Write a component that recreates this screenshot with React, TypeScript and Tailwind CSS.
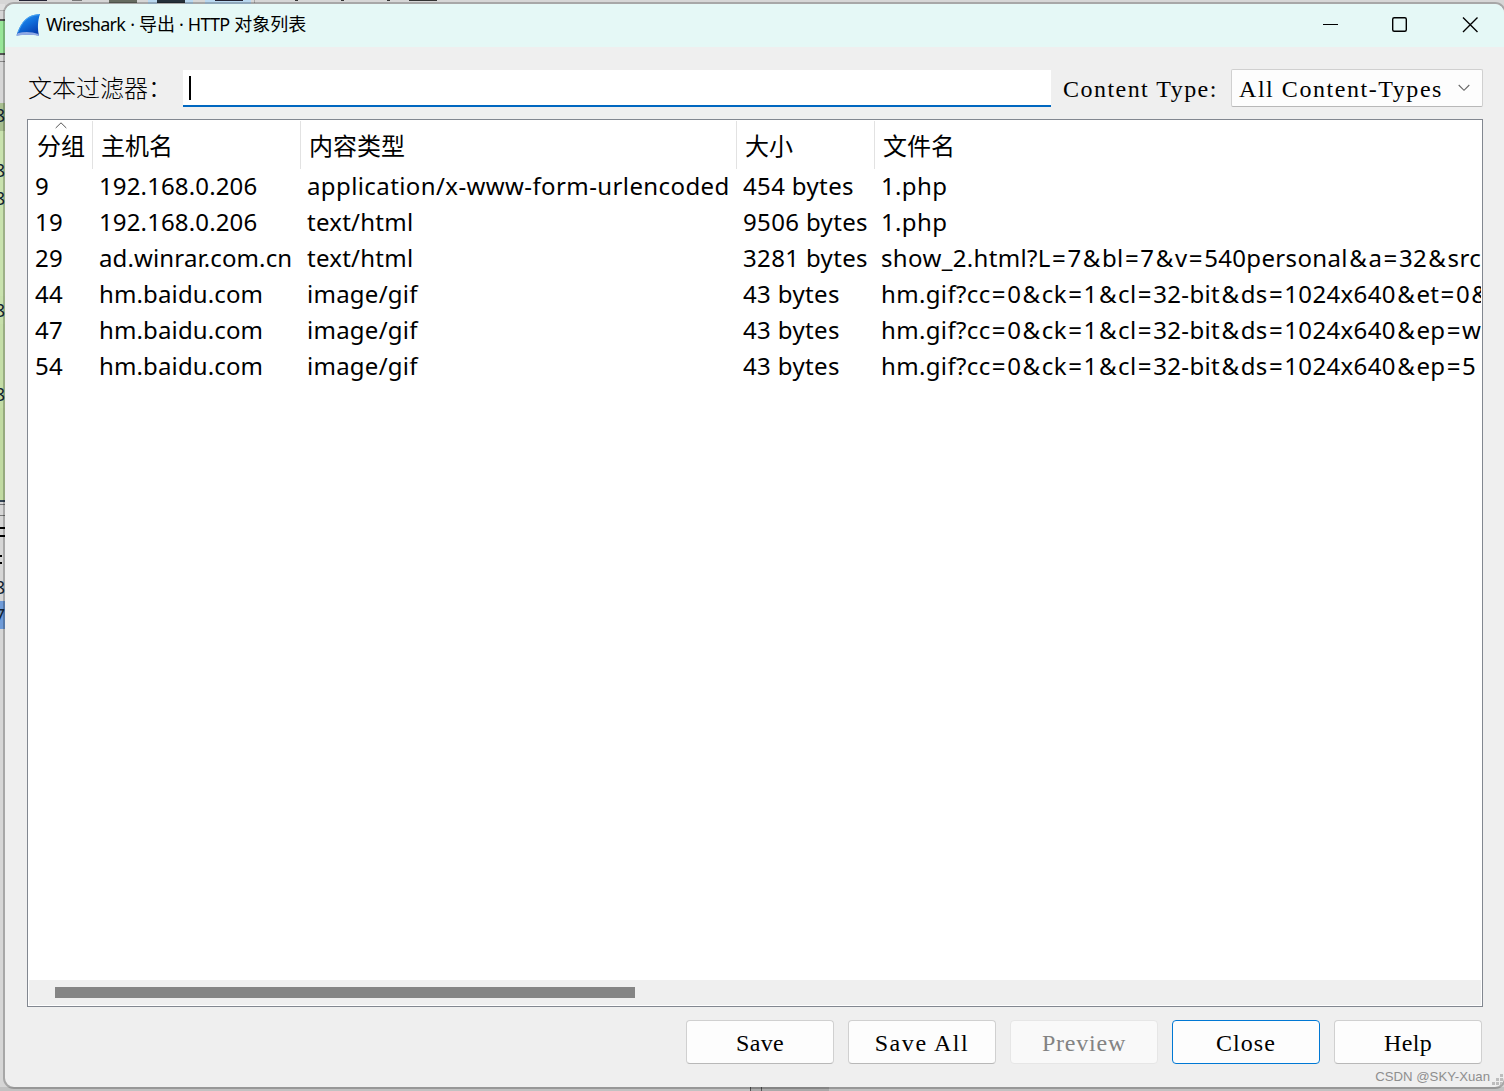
import React from 'react';

const UI = "font-['Noto_Sans','Noto_Sans_CJK_SC',sans-serif]";
const SONG = "font-['Liberation_Serif','Noto_Sans_CJK_SC',serif]";

const columns = [
  { name: '分组', cls: 'w-[64px]', sorted: true },
  { name: '主机名', cls: 'w-[208px]' },
  { name: '内容类型', cls: 'w-[436px]' },
  { name: '大小', cls: 'w-[138px]' },
  { name: '文件名', cls: 'flex-1' },
];

const rows = [
  { id: '9', host: '192.168.0.206', type: 'application/x-www-form-urlencoded', size: '454 bytes', file: '1.php' },
  { id: '19', host: '192.168.0.206', type: 'text/html', size: '9506 bytes', file: '1.php' },
  { id: '29', host: 'ad.winrar.com.cn', type: 'text/html', size: '3281 bytes', file: 'show_2.html?L=7&bl=7&v=540personal&a=32&src' },
  { id: '44', host: 'hm.baidu.com', type: 'image/gif', size: '43 bytes', file: 'hm.gif?cc=0&ck=1&cl=32-bit&ds=1024x640&et=0&' },
  { id: '47', host: 'hm.baidu.com', type: 'image/gif', size: '43 bytes', file: 'hm.gif?cc=0&ck=1&cl=32-bit&ds=1024x640&ep=w' },
  { id: '54', host: 'hm.baidu.com', type: 'image/gif', size: '43 bytes', file: 'hm.gif?cc=0&ck=1&cl=32-bit&ds=1024x640&ep=5' },
];

const buttons = [
  { label: 'Save', cls: 'border-[#d0d0d0] border-b-[#b8b8b8] bg-[#fdfdfd] text-black tracking-[0.33px]' },
  { label: 'Save All', cls: 'border-[#d0d0d0] border-b-[#b8b8b8] bg-[#fdfdfd] text-black tracking-[1.58px]' },
  { label: 'Preview', cls: 'border-[#e6e6e6] bg-[#f9f9f9] text-[#838383] tracking-[0.77px]' },
  { label: 'Close', cls: 'border-[#0078d4] bg-[#fdfdfd] text-black tracking-[1.07px]' },
  { label: 'Help', cls: 'border-[#d0d0d0] border-b-[#b8b8b8] bg-[#fdfdfd] text-black tracking-[0.33px]' },
];

// Bits of the main window's toolbar that show above the dialog.
const toolbar = [
  'ml-[19px] h-px w-[28px] bg-[#223]',
  'ml-[25px] h-px w-[10px] bg-[#777]',
  'ml-[27px] h-[3px] w-[28px] bg-[#666b60]',
  'ml-[11px] h-1 w-[9px] bg-[#b9d8f0]',
  'h-[3px] w-[28px] bg-[#25303a]',
  'h-1 w-[8px] bg-[#b9d8f0]',
  'ml-[12px] h-1 w-[10px] bg-[#b9d8f0]',
  'h-1 w-[28px] border-t border-[#223] bg-[#b9d8f0]',
  'h-1 w-[8px] bg-[#b9d8f0]',
  'ml-[3px] h-[3px] w-px bg-[#aaa]',
  'ml-[40px] h-px w-[3px] bg-[#333]',
  'ml-[43px] h-px w-[3px] bg-[#333]',
  'ml-[43px] h-px w-[3px] bg-[#333]',
  'ml-[19px] h-px w-[28px] bg-[#333]',
];

// Slices of the packet list and the byte view left of the dialog, top to bottom.
const slices = [
  { cls: 'h-[7px] border-b border-[#b0b0b0] bg-[#e0e0e0]' },
  { cls: 'h-[8px]' },
  { cls: 'h-[36px] border-y-2 border-[#555] bg-[#98e698]' },
  { cls: 'h-[7px] border-b border-[#888]' },
  { cls: 'h-[41px]' },
  { cls: 'h-[28px] bg-[#a8bf90] pb-[5px]', text: '8' },
  { cls: 'h-[25px] bg-[#c9e2ae]' },
  { cls: 'h-[28px] bg-[#c9e2ae]', text: '8' },
  { cls: 'h-[28px] bg-[#c9e2ae]', text: '8' },
  { cls: 'h-[84px] bg-[#c9e2ae]' },
  { cls: 'h-[28px] bg-[#c7e0ab]', text: '8' },
  { cls: 'h-[56px] bg-[#c5dea8]' },
  { cls: 'h-[28px] bg-[#c3dca5]', text: '8' },
  { cls: 'h-[94px] border-b-2 border-[#345] bg-[#c1daa2]' },
  { cls: 'h-[2px]' },
  { cls: 'h-[12px] border-y border-[#777]' },
  { cls: 'h-[11px]' },
  { cls: 'h-[10px] border-y-2 border-black' },
  { cls: 'h-[36px] pt-[8px]', dots: true },
  { cls: 'h-[28px]', text: '8' },
  { cls: 'h-[28px] bg-[#6f9bd8]', text: '7' },
];

function SharkFin() {
  return (
    <svg className="mt-px h-6 w-6" viewBox="0 0 24 24">
      <defs>
        <linearGradient id="fin" x1="0.2" y1="0" x2="0.8" y2="1">
          <stop offset="0" stopColor="#2f96f0" />
          <stop offset="0.45" stopColor="#0f6fdc" />
          <stop offset="1" stopColor="#0637a8" />
        </linearGradient>
      </defs>
      <path d="M.5 22.5C4 12 9 1.500 24 1C21.500 8 21.500 16 23 22.500Q12 20.500 .5 22.500Z" fill="url(#fin)" />
      <path d="M1.500 20.300Q12 17.500 22.500 21L23 22.700Q12 21 .5 22.700Z" fill="#8fa8e4" />
      <path d="M2 19.500C6 9 11 2.500 23 1.600" fill="none" stroke="#55aef5" strokeWidth=".8" />
    </svg>
  );
}

// File names give "=" and "&" a little more room than letters and digits.
function FileName({ value }: { value: string }) {
  return (
    <span className="tracking-[0.35px]">
      {value.split(/([=&])/).map((part, i) =>
        i % 2 ? (
          <span key={i} className="mx-[1.3px]">
            {part}
          </span>
        ) : (
          part
        ),
      )}
    </span>
  );
}

function Backdrop() {
  return (
    <div className={`absolute inset-0 flex flex-col overflow-hidden bg-[#d6d6d6] text-[18px] leading-none text-[#123] ${UI}`}>
      <div className="flex h-1 shrink-0 items-start">
        {toolbar.map((cls, i) => (
          <div key={i} className={`shrink-0 ${cls}`} />
        ))}
      </div>
      <div className="flex w-[5px] flex-1 flex-col">
        {slices.map((s, i) => (
          <div key={i} className={`flex w-[5px] shrink-0 flex-col items-end justify-center ${s.cls}`}>
            {s.text}
            {s.dots && (
              <div className="mr-[3px] flex flex-col gap-[5px]">
                <div className="size-[2px] bg-black" />
                <div className="size-[2px] bg-black" />
              </div>
            )}
          </div>
        ))}
      </div>
      <div className="flex h-1 shrink-0 bg-[#c2c2c2] pl-[750px]">
        <div className="w-3 border-x border-[#555] bg-[#aaa]" />
        <div className="w-[67px] bg-[#aaa]" />
      </div>
    </div>
  );
}

export default function App() {
  return (
    <div className="relative h-[1091px] w-[1504px] overflow-hidden pl-[3px] pt-[2px]">
      <Backdrop />
      <div className="relative flex h-[1087px] w-[1503px] flex-col overflow-hidden rounded-[11px] border-2 border-black/22 bg-[#efefef] bg-clip-padding">
        <header className="flex h-[43px] shrink-0 items-center bg-[#e5f8f6] pb-[3px] pl-[11px]">
          <SharkFin />
          <h1 className={`ml-[6px] flex gap-[5px] whitespace-pre text-[18px] leading-6 text-black ${UI}`}>
            <span className="tracking-[-0.7px]">Wireshark</span>
            <span>·</span>
            <span className="ml-[-1px]">导出</span>
            <span className="ml-[-1px]">·</span>
            <span className="ml-[-1px] tracking-[-0.8px]">HTTP</span>
            <span>对象列表</span>
          </h1>
          <svg className="ml-auto mr-[23px] mt-[2px] h-[18px] w-[160px]" viewBox="0 0 160 18" fill="none" stroke="#000" strokeWidth="1.4">
            <path d="M2 8.500H17" strokeWidth="1" />
            <rect x="71.700" y="1.700" width="13.600" height="13.600" rx="1.500" />
            <path d="M142 1.500L156.500 16M156.500 1.500L142 16" />
          </svg>
        </header>

        <div className={`mt-[22px] flex h-[38px] shrink-0 items-center pl-[22px] text-[24px] text-black ${SONG}`}>
          <label className="w-[156px] whitespace-nowrap pl-px pt-[2px] font-light leading-8">文本过滤器：</label>
          <div className="flex h-[37px] w-[868px] items-center border-b-2 border-[#0067c0] bg-white pl-[6px] pt-px">
            <div className="h-6 w-[2px] bg-black" />
          </div>
          <span className="ml-3 w-[168px] whitespace-pre pt-[2px] tracking-[1.46px]">Content Type:</span>
          <div className="flex h-[38px] w-[252px] items-center rounded-[2px] border border-[#d0d0d0] border-b-[#b8b8b8] bg-[#fdfdfd] pl-[7px]">
            <span className="whitespace-pre pt-[2px] tracking-[1.55px]">All Content-Types</span>
            <svg className="ml-auto mr-3 h-[8px] w-3" viewBox="0 0 12 8" fill="none" stroke="#666" strokeWidth="1.100">
              <path d="M.7 1L6 6.300L11.300 1" />
            </svg>
          </div>
        </div>

        <main className={`ml-[22px] mt-3 flex h-[888px] w-[1456px] shrink-0 flex-col border border-[#828790] bg-white p-px text-[24px] text-black ${UI}`}>
          <div className="flex h-12 shrink-0">
            {columns.map((c) => (
              <div key={c.name} className={`relative flex shrink-0 items-center border-r border-[#e2e2e2] pl-2 pt-[2px] last:border-r-0 ${c.cls}`}>
                {c.sorted && (
                  <svg className="absolute inset-x-0 top-px mx-auto h-[7px] w-3" viewBox="0 0 12 7" fill="none" stroke="#555" strokeWidth="1">
                    <path d="M.7 6L6 .8L11.300 6" />
                  </svg>
                )}
                <span className="whitespace-nowrap leading-8">{c.name}</span>
              </div>
            ))}
          </div>
          <div className="mt-[-1px] flex flex-1 flex-col overflow-hidden">
            {rows.map((r) => (
              <div key={r.id} className="flex h-9 shrink-0 items-center whitespace-pre pl-[6px] leading-9">
                <span className="w-16 shrink-0 tracking-[0.2px]">{r.id}</span>
                <span className="w-[208px] shrink-0 tracking-[0.13px]">{r.host}</span>
                <span className={`w-[436px] shrink-0 ${r.id === '9' ? 'tracking-[0.4px]' : 'tracking-[0.25px]'}`}>{r.type}</span>
                <span className="w-[138px] shrink-0 tracking-[0.36px]">{r.size}</span>
                <FileName value={r.file} />
              </div>
            ))}
          </div>
          <div className="flex h-[25px] shrink-0 items-center bg-[#efefef] pl-[26px]">
            <div className="h-[11px] w-[580px] bg-[#858585]" />
          </div>
        </main>

        <footer className={`mt-[13px] flex gap-[14px] pl-[681px] text-[24px] ${SONG}`}>
          {buttons.map((b) => (
            <button key={b.label} className={`flex h-11 w-[148px] shrink-0 items-center justify-center whitespace-pre rounded-[4px] border pt-[2px] ${b.cls}`}>
              {b.label}
            </button>
          ))}
        </footer>
        <div className="flex items-end justify-end pt-1 font-['Liberation_Sans',sans-serif] text-[13.2px] leading-[18px] text-[#8e8e8e]">
          <span className="pr-[2px]">CSDN @SKY-Xuan</span>
          <svg className="h-3 w-3" viewBox="0 0 12 12" fill="#bdbdbd">
            <path d="M8 0h3v3h-3zM4 4h3v3h-3zM8 4h3v3h-3zM0 8h3v3h-3zM4 8h3v3h-3zM8 8h3v3h-3z" />
          </svg>
        </div>
      </div>
    </div>
  );
}
